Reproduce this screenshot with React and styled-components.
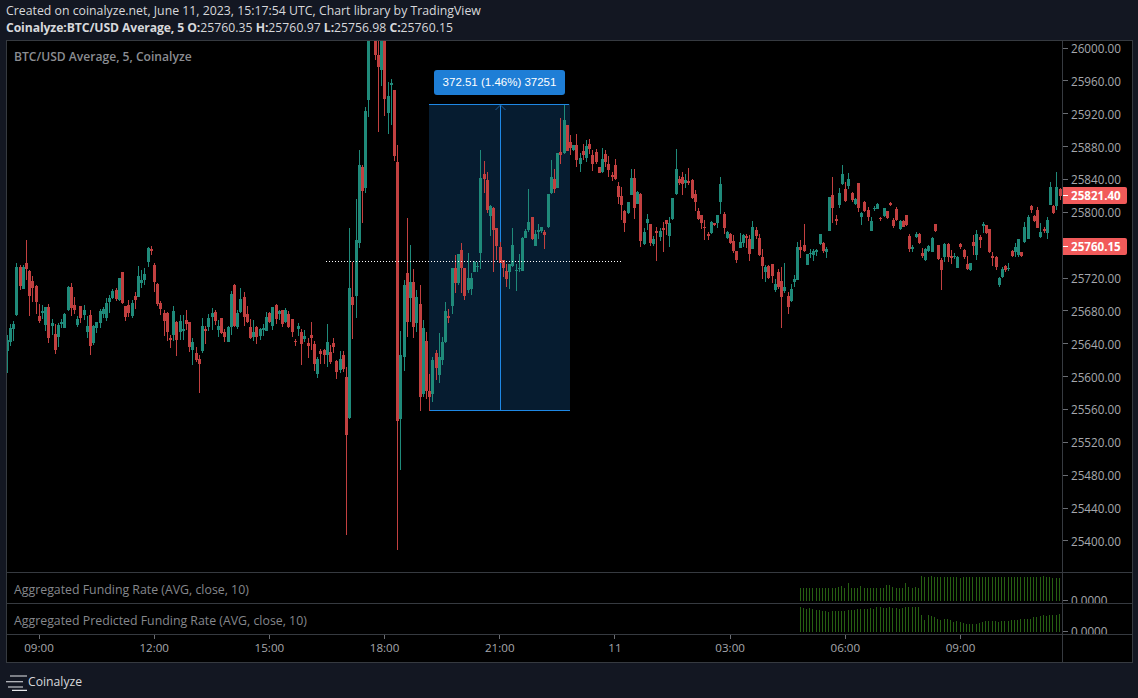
import React from "react";
import styled, { createGlobalStyle } from "styled-components";

const Global = createGlobalStyle`
  html, body { margin: 0; padding: 0; background: #131722; }
  body { width: 1138px; height: 698px; overflow: hidden; }
`;

const UI = `"Open Sans", "Noto Sans", "Liberation Sans", sans-serif`;

// candle tables: colour, body top, body bottom, wick top, wick bottom
const seg1 = `g330,362,315,430 g293,335,282,348 g282,297,273,333 g110,255,98,258 r110,168,105,180 g110,177,105,177 r99,117,30,150 r123,197,120,258 r153,175,138,215 r167,216,165,252 r258,274,222,278 g243,249,225,268 g232,285,230,303 r231,323,222,338 g279,288,268,315 r312,360,283,372 g285,320,280,350 g276,283,268,295 g252,293,250,293 g170,240,168,243 r171,234,160,258 r225,240,200,252 g267,285,258,290 r228,264,228,278 g240,256,225,270 g288,305,258,325 r255,347,240,375 g288,340,285,345 g277,293,277,308 g242,280,238,295 g237,252,232,265 g220,263,205,273 g204,216,195,250 g182,204,178,208 r181,207,175,212 g144,210,144,212 r126,220,126,222 r228,261,228,272 r225,249,210,262 g219,258,210,264 r198,210,186,236 g138,200,108,200 g150,159,120,173 g132,150,115,165 g54,95,51,110 r57,63,48,75 r105,156,99,186 r162,222,160,228 r219,237,213,255 r250,273,240,318 r249,306,246,332 r323,329,315,354 g243,315,228,332 r276,330,273,378 g273,306,255,330 g297,303,255,330 r270,282,240,300 r276,351,276,366 g336,360,325,405 r369,390,351,396 r387,402,375,489 g288,363,264,369 r296,303,288,342 g264,291,252,303 g249,261,234,300 r246,273,240,285 g288,300,270,320 r264,309,264,312 r306,321,297,335 g291,336,288,336 g192,291,183,315 r165,288,162,291 g249,291,240,297 g207,246,174,250 r201,261,186,288 r252,276,228,279 r291,324,267,328 g306,321,270,333 r291,321,288,342 g297,318,294,330 g294,300,282,318 g261,303,246,303 r249,276,246,280 g231,288,231,300 r225,267,222,282 g243,252,240,270 r240,282,240,291 g240,276,234,278 r252,291,243,293 r267,306,267,321 r333,336,327,348 g288,297,279,318 r306,342,297,405 g318,327,300,336 r339,348,324,384 r315,324,276,360 r342,402,333,423 g387,432,380,444 r363,372,357,402 r360,375,357,402 g336,375,282,410`;

const seg2 = `r352,362,345,364 r343,347,338,353 r361,372,360,379 g359,370,351,373 r355,369,351,372 r377,435,367,535 g288,418,228,419 r297,305,262,339 g240,296,199,318 g165,243,150,248 r167,191,165,223 g111,188,107,193 g30,100,30,117 g0,1,0,1 r30,55,20,60 r55,67,30,132 g30,70,30,86 r30,99,30,116 g96,113,82,134 g83,85,79,125 r90,156,90,161 r162,421,145,550 g355,419,331,470 g285,357,280,371 r273,322,218,337 g282,298,245,322 r282,327,269,338 g297,323,290,332 r304,397,285,411 g328,394,320,397 r341,391,332,399 r391,397,374,411 g360,394,357,402 r353,368,350,380 g357,375,333,383 g342,360,337,365 g311,342,302,343 r316,318,309,323 g268,306,268,314 r268,283,255,293 g254,283,254,285 r250,268,243,293 r268,296,268,300 g278,290,253,293 g278,289,273,295 g262,272,261,272 g266,267,262,272 g178,253,150,269 r174,179,161,193 r180,210,172,213 g206,216,205,236 r208,230,207,272 r228,246,228,260 r247,263,242,263 r260,268,260,277 r271,279,264,287 g264,272,264,289 g245,266,228,267 g270,271,264,291 g268,269,254,272 g238,271,237,271 g231,238,229,238 g222,230,189,232 r217,239,217,240 g234,246,230,246 g230,232,224,239 g227,231,227,233 r232,235,230,249 g194,227,194,228 g177,193,160,194 r179,189,169,193 g153,188,153,188 r152,155,118,164 g120,153,105,154 r125,151,125,151 r142,148,135,155 g145,150,145,151 r145,160,134,167 g158,164,153,172 r151,155,144,160 g146,158,140,162 r144,149,139,154 r155,164,150,171 r152,162,149,164 r167,173,167,173 g159,172,148,173 r154,162,150,167 r164,170,156,177 r175,177,172,181 r165,179,159,180 r186,197,182,204 r196,205,187,220 r211,223,210,232 g202,213,202,214 g178,195,169,195 r178,208,169,219 g192,204,191,204 r194,241,193,247 g232,244,228,245 g219,223,214,230 r224,243,224,246 g239,244,236,246 r231,233,227,261 g231,237,228,241 r228,230,222,252 r220,224,220,235 g223,236,217,247 g198,219,198,220 g169,194,149,195 r179,183,176,185 r177,184,172,195 g180,183,174,188 r181,183,168,185 r180,198,179,199 r194,202,190,211 r211,219,208,220 r215,223,215,229 r227,228,220,240 r234,236,232,240 g222,233,221,234 r223,225,223,226 g215,223,215,228 g184,202,177,214 r214,228,212,234 g232,238,231,239 r234,243,233,244 r241,251,235,253 r251,260,251,263 g242,248,233,248 g235,243,234,247 r236,238,234,248 r239,254,235,261 g227,249,221,249 r230,236,227,239 r238,255,234,256 r257,266,249,279 g267,272,265,282 r266,278,265,279 r264,276,264,283 g284,290,279,292 r272,287,269,289 r281,297,267,328 g287,291,263,293 r296,307,292,314 g289,301,284,302 g279,282,275,287 g247,280,242,280 r247,250,240,258 r245,251,224,252 g254,265,254,265 g253,254,249,258 g251,255,249,261 g250,252,249,256 g234,244,234,245 r243,251,242,253 g249,252,247,258 g197,231,197,231 r195,208,177,223 r219,221,215,225 g193,205,188,208`;

const seg3 = `g72,102,45,105 r118,153,95,155 g87,107,70,118 r130,150,127,155 g147,162,145,165 r100,175,100,185 g188,200,185,225 r155,183,152,185 r180,200,170,212 g212,243,202,243 g174,177,168,182 g161,177,158,178 r203,208,201,213 g175,198,175,200 r183,203,182,208 r158,165,155,168 r210,228,205,235 r178,210,170,213 g213,238,210,240 r213,230,210,232 r195,225,195,228 r257,297,253,305 g290,298,285,305 g252,262,246,265 r252,280,250,281 r310,317,295,325 g297,330,295,333 g288,303,285,305 g265,305,260,307 r223,243,223,246 r285,328,285,330 r330,360,325,420 g282,320,280,335 r282,322,280,335 r318,323,300,342 g319,322,310,328 g320,353,318,355 r283,292,280,297 r300,322,296,326 r342,358,318,360 g340,360,338,362 r277,288,255,315 g253,315,240,330 r260,270,255,295 g222,227,215,250 r226,250,224,252 r237,305,237,308 r318,323,305,348 r320,352,318,360 g383,405,380,410 g356,380,350,385 r348,360,345,365 g354,357,340,362 r303,317,300,320 g292,305,280,320 g268,315,268,320 r306,318,305,322 g232,275,215,278 g202,267,195,267 r167,180,165,190 r198,213,195,215 r180,233,170,235 g247,260,218,264 r238,244,232,250 g210,250,200,267 g112,165,97,165 r168,188,165,192 g112,168,67,180 r118,137,115,150`;

const parse = (s, off, k) =>
  s.split(/\s+/).map((t) => {
    const [a, b, c, d] = t.slice(1).split(",").map((v) => off + Number(v) / k);
    return { up: t[0] === "g", top: a, bot: b, wt: c, wb: d };
  });

const CANDLES = [...parse(seg1, 230, 3), ...parse(seg2, 0, 1), ...parse(seg3, 150, 3)];
const cx = (n) => Math.floor(7.33 + n * 3.2);

const FUNDING = [84,84,84,84,84,84,84,84,84,84,84,84,82,78,84,70,84,84,84,78,84,84,84,84,84,84,84,76,76,82,84,84,84,70,80,84,82,84,48,50,50,48,51,51,51,51,51,50,50,51,53,52,52,52,52,52,52,51,51,51,51,51,51,51,51,51,51,51,51,51,51,51,51,51,51,50,48,50,52,53,54,54];
const PREDICTED = [141,144,147,144,147,149,150,152,154,155,153,153,152,154,154,150,150,150,147,147,147,146,144,147,141,141,144,144,141,144,144,147,144,141,141,141,141,141,165,180,165,168,172,178,180,178,177,180,185,183,187,190,191,191,191,191,190,186,183,183,183,183,186,184,183,182,181,181,180,177,178,177,177,172,170,168,165,168,165,165,165,162];

const PRICES = ["26000.00","25960.00","25920.00","25880.00","25840.00","25800.00","","25720.00","25680.00","25640.00","25600.00","25560.00","25520.00","25480.00","25440.00","25400.00"];
const TIMES = ["09:00","12:00","15:00","18:00","21:00","11","03:00","06:00","09:00"];

const Page = styled.div`
  width: 1138px;
  height: 698px;
  background: #131722;
  display: flex;
  flex-direction: column;
  padding: 2px 0 0 6px;
  box-sizing: border-box;
  font-family: ${UI};
  color: #d7d8db;
`;
const Header = styled.div`
  height: 38px;
  font-size: 12.3px;
  line-height: 17px;
  white-space: nowrap;
`;
const HeaderLine = styled.div``;
const DataLine = styled.div`
  font-size: 12.2px;
  letter-spacing: 0.04px;
`;
const Strong = styled.b`
  font-weight: 700;
  letter-spacing: -0.1px;
`;
const Frame = styled.div`
  width: 1127px;
  height: 623px;
  box-sizing: border-box;
  border: 1px solid #363a40;
  background: #000;
  display: grid;
  grid-template-columns: 1055px 1fr;
  grid-template-rows: 531px 31px 31px 1fr;
`;
const Plot = styled.div`
  position: relative;
  overflow: hidden;
  border-top: ${(p) => (p.$divided ? "1px solid #363a40" : "none")};
`;
const Scale = styled.div`
  position: relative;
  overflow: hidden;
  border-left: 1px solid #363a40;
  border-top: ${(p) => (p.$divided ? "1px solid #363a40" : "none")};
`;
const ChartTitle = styled.div`
  position: absolute;
  left: 7px;
  top: 8px;
  font-size: 12.1px;
  line-height: 16px;
  color: #8b8d92;
  font-weight: 600;
  white-space: nowrap;
`;
const PaneTitle = styled.div`
  position: absolute;
  left: 7px;
  top: 9px;
  font-size: 12.33px;
  line-height: 16px;
  color: #85878c;
  white-space: nowrap;
`;
const MeasureLabel = styled.div`
  position: absolute;
  left: 427px;
  top: 29px;
  width: 131px;
  height: 25px;
  border-radius: 3px;
  background: #1e7ed6;
  color: #fff;
  font-family: "Liberation Sans", sans-serif;
  font-size: 11.5px;
  line-height: 25px;
  text-align: center;
`;
const Ticks = styled.div`
  margin-top: -9.4px;
`;
const Tick = styled.div`
  height: 32.86px;
  display: flex;
  align-items: center;
  gap: 3px;
  font-size: 11.7px;
  color: #a6a8ad;
  &::before {
    content: "";
    width: 5px;
    height: 1px;
    background: #6a6d73;
  }
`;
const PriceTag = styled.div`
  position: absolute;
  left: 0;
  top: ${(p) => p.$top}px;
  width: 64px;
  height: 17px;
  border-radius: 0 2px 2px 0;
  background: #f15a5a;
  color: #fff;
  font-size: 11.6px;
  font-weight: 700;
  line-height: 17px;
  display: flex;
  align-items: center;
  gap: 3px;
  &::before {
    content: "";
    width: 5px;
    height: 1px;
    background: #fff;
  }
`;
const PaneValue = styled(Tick)`
  height: 16px;
  margin-top: 19px;
`;
const TimeAxis = styled.div`
  overflow: hidden;
  border-top: 1px solid #363a40;
`;
const TimeTrack = styled.div`
  display: flex;
  margin-left: -25.6px;
`;
const TimeCell = styled.div`
  width: 115.2px;
  flex: none;
  display: flex;
  flex-direction: column;
  align-items: center;
  font-size: 11.6px;
  color: #a6a8ad;
  line-height: 16px;
  &::before {
    content: "";
    width: 1px;
    height: 4px;
    background: #6a6d73;
    margin-bottom: 1px;
  }
`;
const Corner = styled.div`
  border-left: 1px solid #363a40;
  border-top: 1px solid #363a40;
`;
const Footer = styled.div`
  flex: 1;
  display: flex;
  align-items: center;
  font-size: 12.2px;
  color: #d7d8db;
  padding-top: 2px;
`;
const PlotSvg = styled.svg`
  display: block;
`;

const Candle = ({ n, c }) => {
  const x = cx(n);
  const fill = c.up ? "#1f8a7a" : "#c24040";
  return (
    <g fill={fill}>
      <rect x={x} y={c.wt} width={1} height={Math.max(c.wb - c.wt, 1)} />
      <rect x={x - 1} y={c.top} width={3} height={Math.max(c.bot - c.top, 1)} />
    </g>
  );
};

const MainChart = () => (
  <PlotSvg width="1055" height="531" viewBox="7 41 1055 531" shapeRendering="crispEdges">
    <rect x="429" y="104" width="141" height="307" fill="#061c30" />
    <rect x="429" y="104" width="140" height="1" fill="#1e88e5" />
    <rect x="429" y="410" width="141" height="1" fill="#1e88e5" />
    <rect x="500" y="104" width="1" height="307" fill="#1e88e5" />
    <path d="M495.5 110 L500.5 105 L505.5 110" fill="none" stroke="#1b5c99" strokeWidth="1" shapeRendering="auto" />
    {CANDLES.map((c, i) => (
      <Candle key={i} n={i} c={c} />
    ))}
    <line x1="326" x2="621" y1="261.5" y2="261.5" stroke="#fff" strokeWidth="1" strokeDasharray="1 2" />
  </PlotSvg>
);

const Bars = ({ data, base, offsetY }) => (
  <PlotSvg width="1055" height="30" viewBox={`7 ${offsetY} 1055 30`} shapeRendering="crispEdges">
    {data.map((t, i) => {
      const y = 560 + t / 3;
      const b = 560 + base / 3;
      return <rect key={i} x={Math.floor(800 + i * 3.2)} y={y} width="1" height={b - y} fill="#265f12" />;
    })}
  </PlotSvg>
);

const Logo = () => (
  <svg width="22" height="18" viewBox="0 0 22 18" fill="none" stroke="#e6e7ea" strokeWidth="1.1">
    <path d="M4 3H21M0 8.7H17M2 14H17M6 17.4H21" />
  </svg>
);

export default function App() {
  return (
    <>
      <Global />
      <Page>
        <Header>
          <HeaderLine>Created on coinalyze.net, June 11, 2023, 15:17:54 UTC, Chart library by TradingView</HeaderLine>
          <DataLine>
            <Strong>Coinalyze:BTC/USD Average, 5 O:</Strong>25760.35 <Strong>H:</Strong>25760.97 <Strong>L:</Strong>25756.98 <Strong>C:</Strong>25760.15
          </DataLine>
        </Header>
        <Frame>
          <Plot>
            <MainChart />
            <ChartTitle>BTC/USD Average, 5, Coinalyze</ChartTitle>
            <MeasureLabel>372.51 (1.46%) 37251</MeasureLabel>
          </Plot>
          <Scale>
            <Ticks>
              {PRICES.map((p, i) => (
                <Tick key={i}>{p}</Tick>
              ))}
            </Ticks>
            <PriceTag $top={146}>25821.40</PriceTag>
            <PriceTag $top={197}>25760.15</PriceTag>
          </Scale>
          <Plot $divided>
            <Bars data={FUNDING} base={122} offsetY={573} />
            <PaneTitle>Aggregated Funding Rate (AVG, close, 10)</PaneTitle>
          </Plot>
          <Scale $divided>
            <PaneValue>0.0000</PaneValue>
          </Scale>
          <Plot $divided>
            <Bars data={PREDICTED} base={216} offsetY={604} />
            <PaneTitle>Aggregated Predicted Funding Rate (AVG, close, 10)</PaneTitle>
          </Plot>
          <Scale $divided>
            <PaneValue>0.0000</PaneValue>
          </Scale>
          <TimeAxis>
            <TimeTrack>
              {TIMES.map((t, i) => (
                <TimeCell key={i}>{t}</TimeCell>
              ))}
            </TimeTrack>
          </TimeAxis>
          <Corner />
        </Frame>
        <Footer>
          <Logo />
          Coinalyze
        </Footer>
      </Page>
    </>
  );
}
